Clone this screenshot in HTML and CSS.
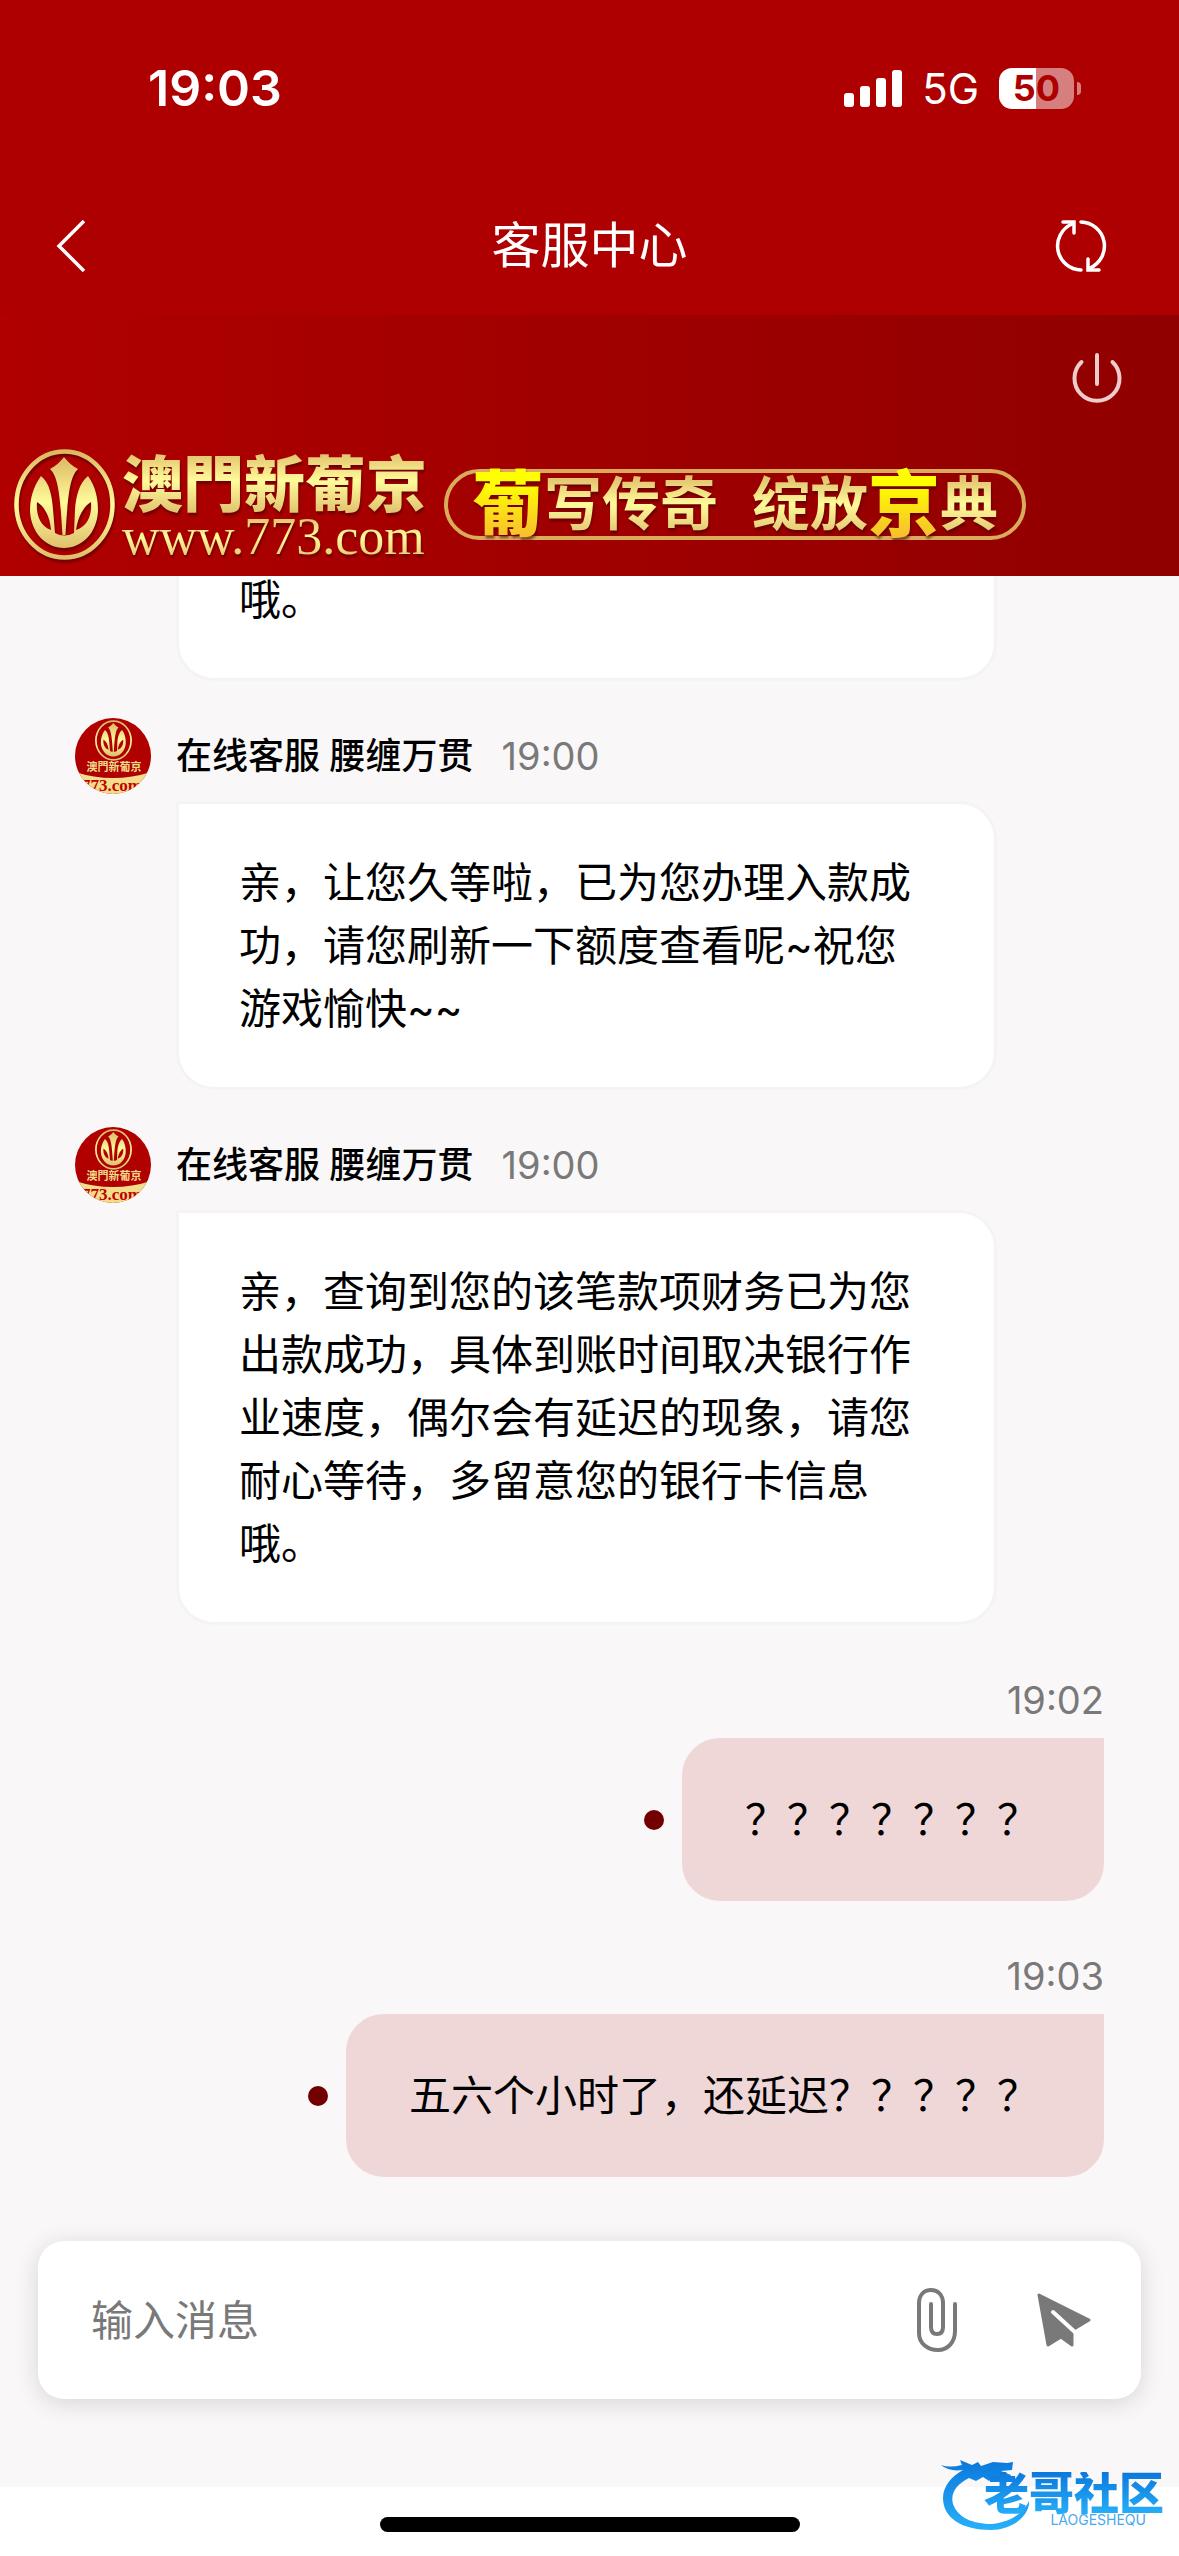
FILE: index.html
```html
<!DOCTYPE html>
<html lang="zh-CN">
<head>
    <meta charset="UTF-8">
    <meta name="viewport" content="width=device-width, initial-scale=1.0">
    <title>客服中心</title>
    <link rel="stylesheet" href="styles.css">
</head>
<body>
    <svg class="defs" width="0" height="0" aria-hidden="true">
        <defs>
            <linearGradient id="gold" x1="0" y1="0" x2="0" y2="1">
                <stop offset="0" stop-color="#dcb865"/>
                <stop offset="0.5" stop-color="#fffb9a"/>
                <stop offset="1" stop-color="#dfc06e"/>
            </linearGradient>
            <symbol id="crest" viewBox="0 0 101 111">
                <ellipse cx="50.5" cy="55.5" rx="48" ry="53" fill="none" stroke="url(#gold)" stroke-width="4.5"/>
                <path fill="url(#gold)" fill-rule="evenodd" d="M50 8C54 13 58 17 64 20C56 28 54 44 51.500 86H48.500C46 44 44 28 36 20C42 17 46 13 50 8ZM27 27C36 34 38 48 39 60L41 84Q50 89 60 84L61 60C62 48 65 34 74 27C82 38 84 50 84 62C83 84 68 99 50 99C32 99 17 84 16 62C16 50 19 38 27 27ZM23 53C22 66 26 77 37 81C36 68 31 58 23 53ZM77 53C69 58 64 68 62 81C74 77 78 66 77 53Z"/>
            </symbol>
        </defs>
    </svg>

    <div class="status-bar">
        <span class="clock">19:03</span>
        <div class="status-icons">
            <svg width="58" height="37" viewBox="0 0 58 37" fill="#fff">
                <rect x="0" y="23" width="10" height="14" rx="3"/>
                <rect x="16" y="16" width="10" height="21" rx="3"/>
                <rect x="32" y="8" width="10" height="29" rx="3"/>
                <rect x="48" y="0" width="10" height="37" rx="3"/>
            </svg>
            <span class="network">5G</span>
            <div class="battery"><span>50</span></div>
        </div>
    </div>

    <header class="nav">
        <button class="icon-btn" aria-label="返回">
            <svg width="30" height="52" viewBox="0 0 30 52" fill="none" stroke="#fff" stroke-width="3.500">
                <path d="M28 1L3 26L28 51"/>
            </svg>
        </button>
        <h1>客服中心</h1>
        <button class="icon-btn" aria-label="刷新">
            <svg width="52" height="52" viewBox="0 0 52 52" fill="none" stroke="#fff" stroke-width="3.500" stroke-linecap="round">
                <path d="M26 2A24 24 0 0 1 35 48M26 50A24 24 0 0 1 17 4"/>
                <path d="M8 2H19V13M44 50H33V39"/>
            </svg>
        </button>
    </header>

    <section class="banner">
        <button class="icon-btn power" aria-label="结束对话">
            <svg width="50" height="50" viewBox="0 0 50 50" fill="none" stroke="#eccccc" stroke-width="4" stroke-linecap="round">
                <path d="M9.500 9A22.500 22.500 0 1 0 40.500 9M25 2V31"/>
            </svg>
        </button>
        <div class="brand">
            <svg class="crest" width="101" height="111"><use href="#crest"/></svg>
            <div class="brand-text">
                <strong class="gold">澳門新葡京</strong>
                <span class="gold site">www.773.com</span>
            </div>
            <div class="slogan">
                <b class="big">葡</b>
                <span class="gold">写传奇</span>
                <span class="gold second">绽放</span>
                <b class="big">京</b>
                <span class="gold">典</span>
            </div>
        </div>
    </section>

    <main class="chat">
        <article class="message">
            <p class="bubble">亲，查询到您的该笔款项财务已为您出款成功，具体到账时间取决银行作业速度，偶尔会有延迟的现象，请您耐心等待，多留意您的银行卡信息哦。</p>
        </article>

        <article class="message">
            <div class="meta">
                <svg class="avatar" width="76" height="76" viewBox="0 0 76 76" role="img" aria-label="客服头像">
                    <rect width="76" height="76" fill="#b00000"/>
                    <use href="#crest" x="20" y="2" width="37" height="41"/>
                    <path d="M0 54Q38 66 76 54V76H0Z" fill="#f3dd8a"/>
                    <text class="avatar-name" x="39" y="53" text-anchor="middle">澳門新葡京</text>
                    <text class="avatar-site" x="37" y="73" text-anchor="middle">773.com</text>
                </svg>
                <span class="name">在线客服 腰缠万贯</span>
                <time>19:00</time>
            </div>
            <p class="bubble">亲，让您久等啦，已为您办理入款成功，请您刷新一下额度查看呢~祝您游戏愉快~~</p>
        </article>

        <article class="message">
            <div class="meta">
                <svg class="avatar" width="76" height="76" viewBox="0 0 76 76" role="img" aria-label="客服头像">
                    <rect width="76" height="76" fill="#b00000"/>
                    <use href="#crest" x="20" y="2" width="37" height="41"/>
                    <path d="M0 54Q38 66 76 54V76H0Z" fill="#f3dd8a"/>
                    <text class="avatar-name" x="39" y="53" text-anchor="middle">澳門新葡京</text>
                    <text class="avatar-site" x="37" y="73" text-anchor="middle">773.com</text>
                </svg>
                <span class="name">在线客服 腰缠万贯</span>
                <time>19:00</time>
            </div>
            <p class="bubble">亲，查询到您的该笔款项财务已为您出款成功，具体到账时间取决银行作业速度，偶尔会有延迟的现象，请您耐心等待，多留意您的银行卡信息哦。</p>
        </article>

        <article class="message mine">
            <div class="meta"><time>19:02</time></div>
            <div class="row">
                <i class="dot"></i>
                <p class="bubble">？？？？？？？</p>
            </div>
        </article>

        <article class="message mine">
            <div class="meta"><time>19:03</time></div>
            <div class="row">
                <i class="dot"></i>
                <p class="bubble">五六个小时了，还延迟？？？？？</p>
            </div>
        </article>
    </main>

    <form class="composer">
        <input type="text" placeholder="输入消息" aria-label="输入消息">
        <button class="icon-btn" type="button" aria-label="附件">
            <svg width="40" height="64" viewBox="0 0 40 64" fill="none" stroke="#797979" stroke-width="4" stroke-linecap="round">
                <path d="M38 16V43C38 54 31 62 21 62C10 62 2 55 2 45V15C2 7 7 2 14 2C21 2 26 7 26 15V39C26 44 24 46 20 46C16 46 14 44 14 39V16"/>
            </svg>
        </button>
        <button class="icon-btn" type="submit" aria-label="发送">
            <svg width="54" height="54" viewBox="0 0 54 54">
                <path d="M2 2L52 27L37 36L35 40V52L24 44L11 52Z" fill="#797979" stroke="#797979" stroke-width="3" stroke-linejoin="round"/>
                <path d="M16 19L40 41" stroke="#fff" stroke-width="4" stroke-linecap="round"/>
            </svg>
        </button>
    </form>

    <footer class="home-area">
        <div class="home-indicator"></div>
        <div class="community">
            <svg class="dragon" width="90" height="78" viewBox="0 0 90 78">
                <defs>
                    <linearGradient id="blue" x1="0" y1="0" x2="0" y2="1">
                        <stop offset="0" stop-color="#0b78dc"/>
                        <stop offset="1" stop-color="#28b0fa"/>
                    </linearGradient>
                </defs>
                <path fill="url(#blue)" d="M0 12Q8 15 21 12L19 7L31 12L37 9L40 13L52 9L66 10L72 9L71 17L60 18L70 22L68 26L56 23L48 28L42 24L35 28L28 25C16 31 9 40 12 51C17 65 32 71 51 71C69 69 82 61 88 48C89 62 72 77 50 77C21 77 2 65 2 45C2 33 11 23 22 17Q8 19 0 12Z"/>
            </svg>
            <div class="community-text">
                <strong>老哥社区</strong>
                <small>LAOGESHEQU</small>
            </div>
        </div>
    </footer>
</body>
</html>
```
FILE: styles.css
```css
:root {
    --red: #ae0000;
    --page: #f9f7f8;
    --grey: #797979;
    --gold: linear-gradient(#dcb865, #fffb9a 50%, #dfc06e);
}

* {
    margin: 0;
    padding: 0;
    box-sizing: border-box;
}

body {
    height: 100vh;
    display: flex;
    flex-direction: column;
    background: var(--page);
    font-family: Inter, "Noto Sans CJK SC", sans-serif;
    font-size: 42px;
    line-height: 63px;
    color: #000;
}

.defs {
    position: absolute;
}

svg {
    display: block;
    flex-shrink: 0;
}

.icon-btn {
    border: none;
    background: none;
    cursor: pointer;
}

/* status bar */
.status-bar {
    display: flex;
    justify-content: space-between;
    align-items: center;
    height: 176px;
    padding: 0 97px 0 148px;
    background: var(--red);
    color: #fff;
}

.clock {
    font-size: 50px;
    font-weight: 600;
}

.status-icons {
    display: flex;
    align-items: center;
    gap: 20px;
}

.network {
    font-size: 42px;
}

.battery {
    position: relative;
    width: 75px;
    height: 41px;
    margin-right: 8px;
    border-radius: 13px;
    background: linear-gradient(90deg, #fff 50%, #d67f7f 50%);
    color: var(--red);
    font-size: 36px;
    font-weight: 700;
    line-height: 41px;
    text-align: center;
}

.battery::after {
    content: '';
    position: absolute;
    right: -7px;
    top: 14px;
    width: 4px;
    height: 13px;
    border-radius: 0 6px 6px 0;
    background: #d67f7f;
}

/* title bar */
.nav {
    display: grid;
    grid-template-columns: 1fr auto 1fr;
    align-items: center;
    height: 139px;
    padding: 0 72px 0 56px;
    background: var(--red);
    color: #fff;
}

.nav .icon-btn {
    justify-self: start;
}

.nav .icon-btn:last-child {
    justify-self: end;
}

.nav h1 {
    padding-left: 16px;
    font-size: 49px;
    font-weight: 400;
}

/* banner */
.banner {
    display: flex;
    flex-direction: column;
    justify-content: space-between;
    height: 261px;
    padding: 38px 57px 16px 14px;
    background: linear-gradient(90deg, #b00000, #900000);
}

.power {
    align-self: flex-end;
}

.brand {
    display: flex;
    align-items: center;
    gap: 7px;
}

.crest,
.brand-text,
.slogan span,
.slogan b {
    filter: drop-shadow(1px 3px 1px rgba(80, 0, 0, 0.6));
}

.brand-text {
    display: flex;
    flex-direction: column;
    font-size: 61px;
}

.gold {
    background: var(--gold);
    background-clip: text;
    -webkit-background-clip: text;
    color: transparent;
}

.brand-text strong {
    font-family: "Noto Sans CJK TC", sans-serif;
    font-weight: 900;
    line-height: 66px;
}

.site {
    font-family: "Liberation Serif", serif;
    font-size: 52px;
    line-height: 46px;
}

.slogan {
    display: flex;
    align-items: center;
    height: 71px;
    margin-left: 10px;
    padding: 0 24px;
    border: 4px solid #d9ab5b;
    border-radius: 36px;
    font-size: 58px;
    font-weight: 700;
    white-space: nowrap;
}

.slogan .second {
    margin-left: 34px;
}

.big {
    background: linear-gradient(#ffff00 30%, #f3a83e);
    background-clip: text;
    -webkit-background-clip: text;
    color: transparent;
    font-size: 72px;
    font-weight: 900;
    line-height: 104px;
}

/* conversation */
.chat {
    flex: 1;
    display: flex;
    flex-direction: column;
    justify-content: flex-end;
    gap: 37px;
    min-height: 0;
    padding: 0 75px 64px;
    overflow: hidden;
}

.message {
    flex-shrink: 0;
}

.meta {
    display: flex;
    align-items: center;
    height: 76px;
    margin-bottom: 7px;
    font-size: 36px;
}

.avatar {
    margin-right: 25px;
    border-radius: 50%;
}

.avatar-name {
    fill: #f3dd8a;
    font-family: "Noto Sans CJK TC", sans-serif;
    font-size: 11px;
    font-weight: 700;
}

.avatar-site {
    fill: #c00000;
    font-family: "Liberation Serif", serif;
    font-size: 17px;
    font-weight: 700;
}

.name {
    font-weight: 500;
}

time {
    color: var(--grey);
    font-size: 38px;
}

.name + time {
    margin-left: 28px;
}

.bubble {
    width: fit-content;
    max-width: 821px;
    margin-left: 101px;
    padding: 47px 61px 47px 60px;
    border: 3px solid #f5f4f4;
    border-radius: 0 38px 38px 38px;
    background: #fff;
}

.mine .meta {
    justify-content: flex-end;
    margin-bottom: 0;
}

.row {
    display: flex;
    justify-content: flex-end;
    align-items: center;
    gap: 18px;
}

.mine .bubble {
    margin-left: 0;
    padding-right: 62px;
    border-color: #efd7d7;
    border-radius: 38px 0 38px 38px;
    background: #efd7d7;
}

.dot {
    width: 20px;
    height: 20px;
    border-radius: 50%;
    background: #730000;
}

/* message box */
.composer {
    display: flex;
    align-items: center;
    gap: 80px;
    height: 158px;
    margin: 0 38px 88px;
    padding: 0 50px 0 53px;
    border-radius: 26px;
    background: #fff;
    box-shadow: 0 4px 24px rgba(0, 0, 0, 0.14);
}

.composer input {
    flex: 1;
    min-width: 0;
    border: none;
    outline: none;
    background: none;
    font: inherit;
}

.composer input::placeholder {
    color: var(--grey);
}

.home-area {
    position: relative;
    height: 69px;
    padding-top: 30px;
    background: #fff;
}

.home-indicator {
    width: 420px;
    height: 15px;
    margin: 0 auto;
    border-radius: 8px;
    background: #000;
}

/* community mark over the bottom corner */
.community {
    position: absolute;
    right: 15px;
    bottom: 25px;
    width: 223px;
    height: 78px;
}

.dragon {
    position: absolute;
    left: 0;
    top: 0;
}

.community-text {
    position: absolute;
    right: 0;
    bottom: 4px;
    display: flex;
    flex-direction: column;
    align-items: flex-end;
}

.community strong {
    margin-bottom: -3px;
    background: linear-gradient(#0b78dc, #28b0fa);
    background-clip: text;
    -webkit-background-clip: text;
    color: transparent;
    font-size: 45px;
    font-weight: 900;
    line-height: 44px;
}

.community small {
    margin-right: 18px;
    color: #4aa9ea;
    font-size: 14px;
    line-height: 14px;
}
```
